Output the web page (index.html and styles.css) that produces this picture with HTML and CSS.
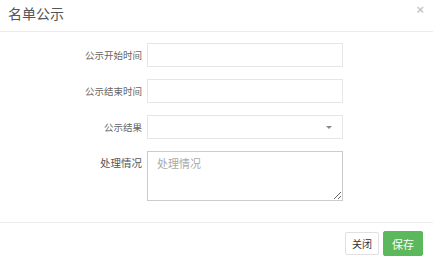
FILE: index.html
```html
<!DOCTYPE html>
<html lang="zh-CN">
  <head>
    <meta charset="UTF-8" />
    <title>名单公示</title>
    <link rel="stylesheet" href="styles.css">
  </head>
  <body>
    <div class="modal">
      <div class="modal-header">
        <h4 class="modal-title">名单公示</h4>
        <span class="close">&times;</span>
      </div>
      <form class="modal-body">
        <div class="form-row">
          <label>公示开始时间</label>
          <input type="text" class="field" />
        </div>
        <div class="form-row">
          <label>公示结束时间</label>
          <input type="text" class="field" />
        </div>
        <div class="form-row">
          <label>公示结果</label>
          <div class="field select">
            <span class="caret"></span>
          </div>
        </div>
        <div class="form-row top">
          <label class="strong">处理情况</label>
          <textarea class="field area" placeholder="处理情况"></textarea>
        </div>
      </form>
      <div class="modal-footer">
        <button type="button" class="btn">关闭</button>
        <button type="button" class="btn btn-primary">保存</button>
      </div>
    </div>
  </body>
</html>
```
FILE: styles.css
```css
* {
  margin: 0;
  padding: 0;
  box-sizing: border-box;
}

body {
  background: #fff;
  font-family: "Noto Sans CJK SC", "Liberation Sans", sans-serif;
  color: #676a6c;
}

.modal {
  width: 433px;
  height: 264px;
  display: flex;
  flex-direction: column;
}

.modal-header {
  height: 32px;
  border-bottom: 1px solid #ececec;
  display: flex;
  justify-content: space-between;
  align-items: flex-start;
  padding: 3px 9px 0 8px;
}

.modal-title {
  font-size: 14px;
  font-weight: normal;
  color: #555;
  line-height: 20px;
}

.close {
  font-size: 13px;
  line-height: 14px;
  color: #c8c8c8;
  font-weight: bold;
  font-family: "Liberation Sans", sans-serif;
}

.modal-body {
  height: 190px;
  padding: 11px 0 0 0;
  display: flex;
  flex-direction: column;
  gap: 12px;
}

.form-row {
  display: flex;
  align-items: center;
}

.form-row.top {
  align-items: flex-start;
}

.form-row label {
  width: 143px;
  padding-right: 1px;
  text-align: right;
  font-size: 9.5px;
  color: #666;
}

.form-row label.strong {
  font-size: 10.5px;
  color: #555;
  padding-top: 4px;
}

.field {
  margin-left: 4px;
  width: 196px;
  height: 24px;
  border: 1px solid #e5e6e7;
  background: #fff;
  font-family: inherit;
  outline: none;
}

.select {
  display: flex;
  justify-content: flex-end;
  align-items: center;
  padding-right: 10px;
}

.caret {
  width: 0;
  height: 0;
  border-left: 3px solid transparent;
  border-right: 3px solid transparent;
  border-top: 3px solid #888;
}

.area {
  height: 50px;
  border-color: #ccc;
  padding: 3px 9px;
  font-size: 11px;
  resize: vertical;
}

.area::placeholder {
  color: #aaa;
}

.modal-footer {
  flex: 1;
  border-top: 1px solid #ececec;
  display: flex;
  justify-content: flex-end;
  align-items: center;
  gap: 4px;
  padding: 0 10px 0 0;
}

.btn {
  height: 23px;
  padding: 0 6px;
  border: 1px solid #e0e0e0;
  border-radius: 2px;
  background: #fff;
  font-family: inherit;
  font-size: 10px;
  color: #333;
}

.btn-primary {
  height: 25px;
  padding: 0 8px;
  background: #5cb85c;
  border-color: #5cb85c;
  color: #fff;
  font-size: 11px;
}
```
